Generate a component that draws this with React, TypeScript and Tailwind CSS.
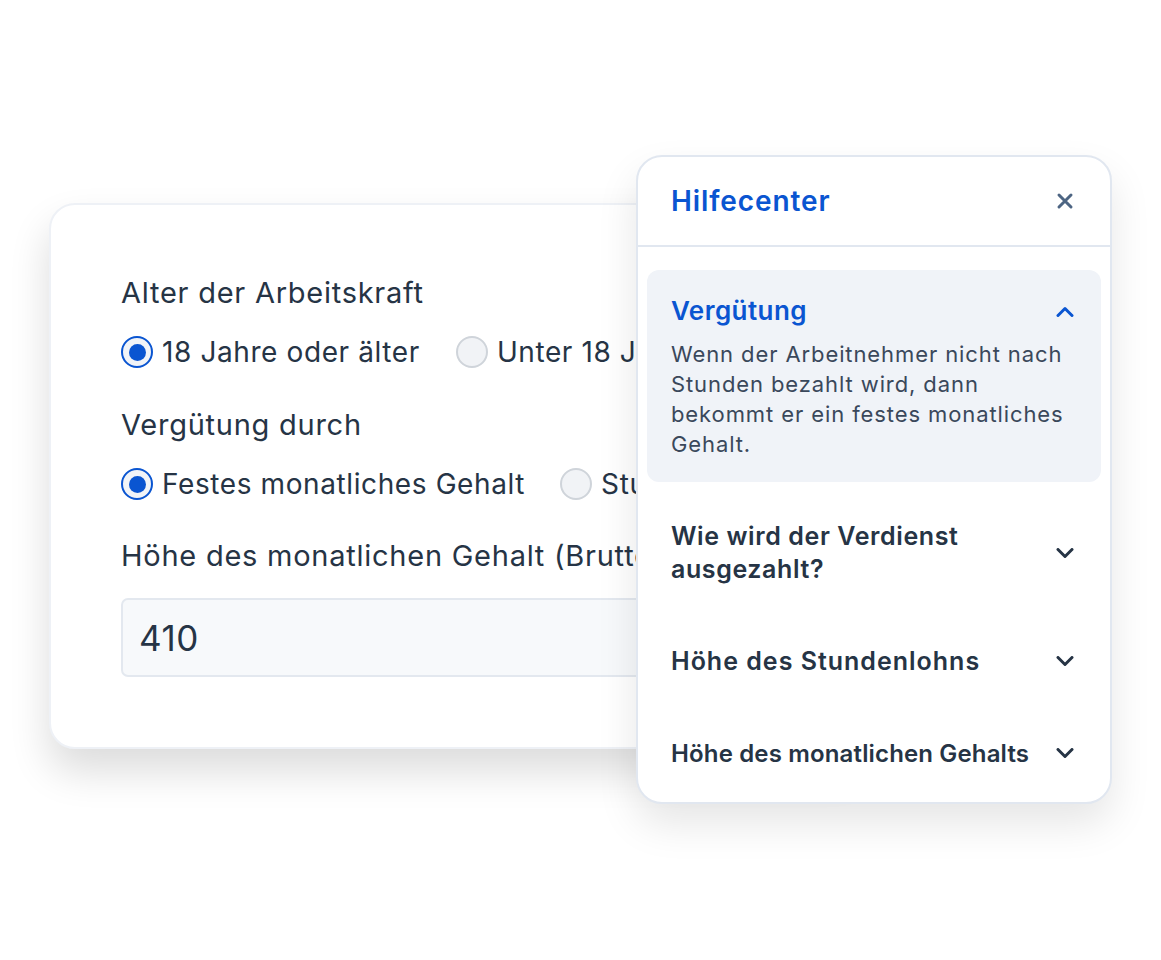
function Radio({ checked }: { checked?: boolean }) {
  return checked ? (
    <span className="flex h-[32px] w-[32px] shrink-0 items-center justify-center rounded-full border-2 border-[#0a55d1] bg-[#f1f4f8]">
      <span className="h-[17px] w-[17px] rounded-full bg-[#0a55d1]" />
    </span>
  ) : (
    <span className="h-[32px] w-[32px] shrink-0 rounded-full border-2 border-[#cfd4da] bg-[#f1f3f6]" />
  );
}

function Option({ label, checked }: { label: string; checked?: boolean }) {
  return (
    <label className="flex h-[32px] items-center gap-[9px] whitespace-nowrap">
      <Radio checked={checked} />
      <span>{label}</span>
    </label>
  );
}

function Chevron({ up, className }: { up?: boolean; className?: string }) {
  return (
    <svg width="18" height="11" viewBox="0 0 18 11" fill="none" className={className}>
      <path
        d={up ? "M2 9.5 9 2.5 16 9.5" : "M2 1.5 9 8.5 16 1.5"}
        stroke="currentColor"
        strokeWidth="3"
        strokeLinecap="round"
        strokeLinejoin="round"
      />
    </svg>
  );
}

export default function App() {
  return (
    <div
      className="relative h-[960px] w-[1161px] overflow-hidden bg-white pl-[49px] pt-[203px] text-[#263445]"
      style={{ fontFamily: "Inter, 'Noto Sans', sans-serif" }}
    >
      {/* formular */}
      <div className="h-[546px] w-[820px] rounded-[26px] border-2 border-[#eef1f6] bg-white pl-[70px] pt-[70px] text-[28px] leading-[36px] tracking-[0.6px] shadow-[0_22px_40px_rgba(0,0,0,0.14)]">
        <p className="text-[29px] tracking-[0.75px]">Alter der Arbeitskraft</p>
        <div className="mt-[25px] flex gap-[36px]">
          <Option label="18 Jahre oder älter" checked />
          <Option label="Unter 18 Jahre" />
        </div>
        <p className="mt-[39px] text-[29px] tracking-[0.75px]">Vergütung durch</p>
        <div className="mt-[25px] flex gap-[35px]">
          <Option label="Festes monatliches Gehalt" checked />
          <Option label="Stundenlohn" />
        </div>
        <p className="mt-[38px] whitespace-nowrap text-[29px] tracking-[0.75px]">Höhe des monatlichen Gehalt (Brutto)</p>
        <div className="mt-[24px] flex h-[79px] w-[700px] items-center rounded-[7px] border-2 border-[#e3e8ef] bg-[#f7f9fb] pl-[16px] text-[35px]">
          410
        </div>
      </div>

      {/* hilfecenter */}
      <div className="absolute left-[636px] top-[155px] h-[649px] w-[476px] rounded-[26px] border-2 border-[#e1e7f0] bg-white shadow-[0_20px_40px_rgba(0,0,0,0.10)]">
        <div className="flex h-[90px] items-center justify-between border-b-2 border-[#e1e7f0] pl-[33px] pr-[36px]">
          <h2 className="text-[28px] font-semibold tracking-[0.9px] text-[#0a55d1]">Hilfecenter</h2>
          <svg width="18" height="18" viewBox="0 0 18 18" fill="none" className="text-[#4d6583]">
            <path d="M3 3 15 15M15 3 3 15" stroke="currentColor" strokeWidth="3" strokeLinecap="round" />
          </svg>
        </div>
        <div className="px-[9px] pt-[23px]">
          <div className="rounded-[12px] bg-[#f0f3f8] pb-[23px] pl-[24px] pr-[27px] pt-[25px]">
            <div className="flex items-center justify-between">
              <span className="text-[26px] font-semibold leading-[32px] tracking-[0.45px] text-[#0a55d1]">Vergütung</span>
              <Chevron up className="text-[#0a55d1]" />
            </div>
            <p className="mt-[12px] whitespace-nowrap text-[22px] leading-[30px] tracking-[0.9px] text-[#3a485b]">
              Wenn der Arbeitnehmer nicht nach
              <br />
              Stunden bezahlt wird, dann
              <br />
              bekommt er ein festes monatliches
              <br />
              Gehalt.
            </p>
          </div>
          <div className="pl-[24px] pr-[27px] font-semibold leading-[33px]">
            <div className="flex items-center justify-between pt-[38px]">
              <span className="w-[320px] text-[25px] tracking-[0.6px]">Wie wird der Verdienst ausgezahlt?</span>
              <Chevron />
            </div>
            <div className="flex items-center justify-between pt-[59px]">
              <span className="text-[25px] tracking-[1px]">Höhe des Stundenlohns</span>
              <Chevron />
            </div>
            <div className="flex items-center justify-between pt-[59px]">
              <span className="text-[24px] tracking-[0.15px]">Höhe des monatlichen Gehalts</span>
              <Chevron />
            </div>
          </div>
        </div>
      </div>
    </div>
  );
}
